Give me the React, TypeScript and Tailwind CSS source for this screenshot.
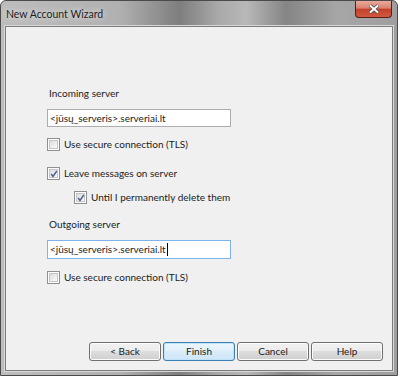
const font = { fontFamily: 'Lato, "Noto Sans", sans-serif' };

function Check({ checked }: { checked?: boolean }) {
  return (
    <span className="relative inline-flex h-[13px] w-[13px] shrink-0 items-center justify-center border border-[#8e8f8f] bg-white">
      <span className="h-[9px] w-[9px] border border-[#c6c6c6] bg-[linear-gradient(135deg,#dcdcdc,#fbfbfb)]" />
      {checked && (
        <svg className="absolute left-[1px] top-[1px]" width="10" height="10" viewBox="0 0 10 10">
          <path d="M2.2 5 L4 7.5 L7.8 2" fill="none" stroke="#4c5f9c" strokeWidth="1.5" />
        </svg>
      )}
    </span>
  );
}

function Row({ checked, label, className }: { checked?: boolean; label: string; className: string }) {
  return (
    <div className={`flex h-[16px] items-center gap-[4px] ${className}`}>
      <Check checked={checked} />
      <span className="text-[10px] text-[#1b1b1b]">{label}</span>
    </div>
  );
}

function Btn({ label, focus }: { label: string; focus?: boolean }) {
  return (
    <div
      className={`flex h-[19px] w-[72px] items-center justify-center rounded-[3px] border text-[10px] text-[#1b1b1b] ${
        focus
          ? "border-[#3c7fb1] bg-[linear-gradient(#eaf6fd_0%,#e2f0fb_50%,#d8ecfa_50%,#cfe6f8_100%)] shadow-[inset_0_0_0_1px_#bfe2f8]"
          : "border-[#707070] bg-[linear-gradient(#f2f2f2_0%,#ebebeb_50%,#dddddd_50%,#cfcfcf_100%)] shadow-[inset_0_0_0_1px_#fcfcfc]"
      }`}
    >
      {label}
    </div>
  );
}

export default function App() {
  return (
    <div className="h-[378px] w-[400px] bg-white" style={font}>
      <div className="flex h-[376px] w-[398px] flex-col rounded-t-[6px] border border-[#4a4a4a] bg-[linear-gradient(90deg,#bdbdbd_0%,#b0b0b0_30%,#7e7e7e_45%,#a9a9a9_55%,#b8b8b8_62%,#858585_72%,#a6a6a6_85%,#9e9e9e_100%)]">
        {/* title bar */}
        <div className="flex h-[25px] items-start justify-between">
          <span className="ml-[5px] mt-[7px] text-[10.5px] leading-[13px] text-[#1e1e1e] [text-shadow:0_0_6px_#ffffff]">
            New Account Wizard
          </span>
          <div className="mr-[5px] flex h-[17px] w-[37px] items-center justify-center rounded-b-[4px] border border-t-0 border-[#5b1d15] bg-[linear-gradient(#e9a99c_0%,#d9826f_45%,#c2412c_50%,#d0593f_100%)]">
            <svg width="12" height="10" viewBox="0 0 12 10">
              <path d="M2 1.5 L10 8.5 M10 1.5 L2 8.5" stroke="#4a4a4a" strokeWidth="3.6" />
              <path d="M2 1.5 L10 8.5 M10 1.5 L2 8.5" stroke="#ffffff" strokeWidth="2" />
            </svg>
          </div>
        </div>
        {/* client area */}
        <div className="mx-[4px] mb-[4px] flex flex-1 flex-col border border-[#7c7c7c] bg-[#f0f0f0] pl-[41px] shadow-[0_0_0_1px_#d8d8d8]">
          <div className="ml-[2px] mt-[58px] h-[16px] text-[10px] leading-[16px] text-[#1b1b1b]">Incoming server</div>
          <div className="mt-[8px] flex h-[18px] w-[184px] items-center border border-[#abadb3] bg-white pl-[2px] text-[10px] text-[#1b1b1b]">
            &lt;jūsų_serveris&gt;.serveriai.lt
          </div>
          <Row label="Use secure connection (TLS)" className="mt-[9px]" />
          <Row checked label="Leave messages on server" className="mt-[13px]" />
          <Row checked label="Until I permanently delete them" className="ml-[27px] mt-[8px]" />
          <div className="ml-[2px] mt-[11px] h-[16px] text-[10px] leading-[16px] text-[#1b1b1b]">Outgoing server</div>
          <div className="mt-[8px] flex h-[19px] w-[184px] items-center border border-[#7eb4ea] bg-white pl-[2px] text-[10px] text-[#1b1b1b]">
            &lt;jūsų_serveris&gt;.serveriai.lt
            <span className="ml-[1px] h-[13px] w-px bg-black" />
          </div>
          <Row label="Use secure connection (TLS)" className="mt-[10px]" />
          <div className="mt-auto mb-[9px] mr-[9px] flex justify-end gap-[2px]">
            <Btn label="< Back" />
            <Btn label="Finish" focus />
            <Btn label="Cancel" />
            <Btn label="Help" />
          </div>
        </div>
      </div>
    </div>
  );
}
